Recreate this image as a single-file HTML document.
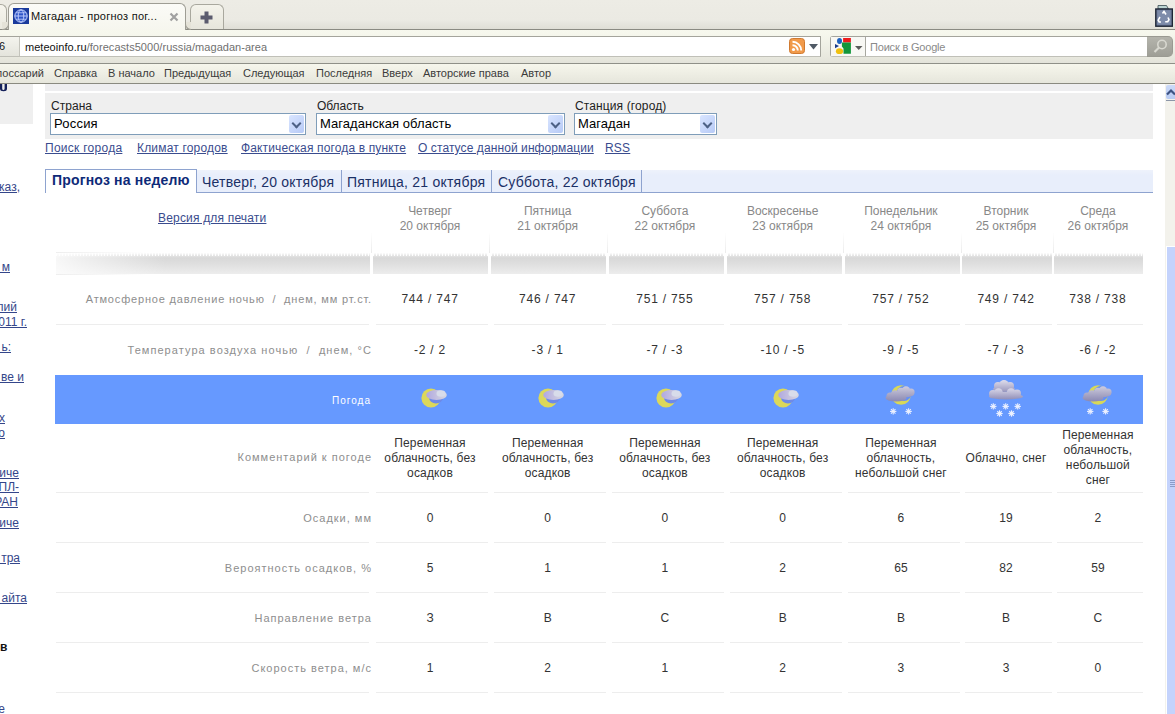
<!DOCTYPE html>
<html><head><meta charset="utf-8">
<style>
*{margin:0;padding:0;box-sizing:border-box}
html,body{width:1175px;height:714px;overflow:hidden;background:#fff;font-family:"Liberation Sans",sans-serif;position:relative}
.a{position:absolute;white-space:nowrap}
/* chrome */
#tabbar{position:absolute;left:0;top:0;width:1175px;height:29px;background:linear-gradient(#EDECE5 0,#EBEAE3 20px,#DFDED6 29px)}
#line29{position:absolute;left:0;top:29px;width:1175px;height:1px;background:#8A8A82}
#nav{position:absolute;left:0;top:30px;width:1175px;height:33px;background:linear-gradient(#F7F8EE 0,#F5F6EC 6px,#E8E8DE 27px,#E3E3DA 33px)}
#line63{position:absolute;left:0;top:63px;width:1175px;height:1px;background:#8F9088}
#bm{position:absolute;left:0;top:64px;width:1175px;height:19px;background:linear-gradient(#F6F6EC,#E6E6DC)}
#line83{position:absolute;left:0;top:83px;width:1175px;height:1px;background:#8A8A80}
.tab{position:absolute;border:1px solid #A9A89E;border-bottom:none;border-radius:6px 6px 0 0}
.bmi{position:absolute;top:67px;font-size:11px;color:#3B3B3B;white-space:nowrap;line-height:13px}
/* page */
.lbl{position:absolute;right:803px;font-size:11px;color:#8E8E8E;letter-spacing:1px;white-space:nowrap;text-align:right;line-height:13px}
.val{position:absolute;font-size:12px;color:#333;text-align:center;white-space:nowrap;line-height:13px}
.sep{position:absolute;height:1px;background:#EDEDED}
.lnk{position:absolute;font-size:12px;color:#3A4C8E;text-decoration:underline;white-space:nowrap;line-height:14px}
.sel{position:absolute;top:113px;height:22px;border:1px solid #7F9DB9;background:#fff}
.sel .t{position:absolute;left:3px;top:2px;font-size:13px;color:#000;white-space:nowrap;letter-spacing:0.05px}
.sel .b{position:absolute;right:1px;top:1px;width:15px;height:18px;background:linear-gradient(135deg,#D9E5FF,#B7CAF6);border-radius:2px}
.sel .b:after{content:"";position:absolute;left:4px;top:5px;width:5px;height:5px;border-right:2px solid #4D6185;border-bottom:2px solid #4D6185;transform:rotate(45deg)}
.ptab{position:absolute;font-size:14px;color:#1B3066;white-space:nowrap;letter-spacing:0.23px;line-height:16px}
.dh{position:absolute;font-size:12px;line-height:15px;color:#888;text-align:center;white-space:nowrap}
.ruler{position:absolute;top:253px;height:21px;background:linear-gradient(#FDFDFD 0,#F4F4F4 1px,#E2E2E2 3px,#D8D8D8 5px,#E0E0E0 12px,#EDEDED 21px)}
.ruler:before{content:"";position:absolute;left:0;right:0;top:0;height:3px;background:repeating-linear-gradient(90deg,#FFF 0,#FFF 1px,transparent 1px,transparent 3px)}
.rl0{}
.rl0:after{content:"";position:absolute;left:0;top:0;bottom:0;width:110px;background:linear-gradient(90deg,rgba(255,255,255,0.8) 0,rgba(255,255,255,0.55) 30px,rgba(255,255,255,0) 110px)}
.ruler i{position:absolute;top:0;width:1px;height:6px;background:#FFF}
.cm{line-height:15px}
.sb{position:absolute;font-size:12px;color:#34468A;text-decoration:underline;white-space:nowrap;line-height:14px}
</style></head><body>

<!-- ===== browser chrome ===== -->
<div id="tabbar"></div>
<div class="tab" style="left:-10px;top:4px;width:17px;height:25px;background:linear-gradient(#F6F5EE,#EAE9DF)"></div>

<div class="tab" style="left:190px;top:4px;width:34px;height:26px;background:linear-gradient(#F4F3EB,#E6E5DB)"></div>
<svg class="a" style="left:199px;top:10px" width="15" height="15" viewBox="0 0 15 15"><path d="M5.5 1.5h4v4h4v4h-4v4h-4v-4h-4v-4h4z" fill="#5B5B6E"/></svg>
<svg class="a" style="left:1155px;top:5px" width="18" height="22" viewBox="0 0 18 22"><path d="M3 0.5h8.5l2 3.5H3z" fill="#BCD4D2" stroke="#3A4A50" stroke-width="0.8"/><rect x="0.8" y="4" width="16.6" height="17.2" fill="#6E7C9C" stroke="#1E2636" stroke-width="1.4"/><rect x="2.5" y="5.5" width="13" height="14" fill="#7E8CAA"/><path d="M7.5 8.5l1.5-2 2 3M13 12.5l1 2.2-1.3 2h-2.5M6 17H4.2l-1-1.8L5 12" stroke="#FFF" stroke-width="1.6" fill="none"/></svg>
<div id="line29"></div>
<div id="nav"></div>
<div class="tab" style="left:8px;top:3px;width:178px;height:27px;background:linear-gradient(#FBFBF7,#F6F6EE);border-color:#9E9D94"></div>
<div class="a" style="left:185px;top:22px;width:6px;height:8px;border-left:1px solid #9E9D94;border-bottom:1px solid #9E9D94;border-radius:0 0 0 6px;background:#E5E3D8"></div>
<div class="a" style="left:2px;top:22px;width:7px;height:8px;border-right:1px solid #9E9D94;border-bottom:1px solid #9E9D94;border-radius:0 0 6px 0;background:#E5E3D8"></div>
<svg class="a" style="left:13px;top:8px" width="16" height="16" viewBox="0 0 16 16"><rect width="16" height="16" fill="#1A3A9C"/><circle cx="8" cy="8" r="6.2" fill="#2E55C8" stroke="#C8D4FF" stroke-width="1"/><ellipse cx="8" cy="8" rx="2.8" ry="6.2" fill="none" stroke="#C8D4FF" stroke-width="0.9"/><line x1="1.8" y1="8" x2="14.2" y2="8" stroke="#C8D4FF" stroke-width="0.9"/><line x1="3" y1="4.8" x2="13" y2="4.8" stroke="#C8D4FF" stroke-width="0.8"/><line x1="3" y1="11.2" x2="13" y2="11.2" stroke="#C8D4FF" stroke-width="0.8"/></svg>
<div class="a" style="left:31px;top:10px;font-size:11px;letter-spacing:0.26px;color:#111">Магадан - прогноз пог...</div>
<svg class="a" style="left:169px;top:12px" width="10" height="10" viewBox="0 0 10 10"><path d="M1.5 1.5L8.5 8.5M8.5 1.5L1.5 8.5" stroke="#A0A0A0" stroke-width="2.2"/></svg>


<div class="a" style="left:-1px;top:36px;width:822px;height:21px;border:1px solid #A4A49C;border-bottom-color:#C0C0B8;background:#fff"></div>
<div class="a" style="left:0;top:37px;width:20px;height:19px;background:linear-gradient(#F4F4EE,#E4E4DC);border-right:1px solid #C4C4BC"></div>
<div class="a" style="left:-1px;top:40px;font-size:11px;color:#111">6</div>
<div class="a" style="left:25px;top:41px;font-size:11px;letter-spacing:0.04px;color:#111">meteoinfo.ru<span style="color:#707070">/forecasts5000/russia/magadan-area</span></div>
<svg class="a" style="left:789px;top:38px" width="16" height="16" viewBox="0 0 16 16"><rect x="0.5" y="0.5" width="15" height="15" rx="3" fill="#F19A4A" stroke="#D07A30"/><circle cx="4.5" cy="11.5" r="1.6" fill="#fff"/><path d="M3.5 7.2a5.3 5.3 0 0 1 5.3 5.3M3.5 3.8a8.7 8.7 0 0 1 8.7 8.7" stroke="#fff" stroke-width="1.9" fill="none"/></svg>
<svg class="a" style="left:809px;top:44px" width="9" height="6" viewBox="0 0 9 6"><path d="M0 0h9L4.5 5.5z" fill="#505A66"/></svg>
<div class="a" style="left:830px;top:36px;width:318px;height:21px;border:1px solid #A4A49C;border-radius:3px 0 0 3px;border-bottom-color:#C0C0B8;background:#fff"></div>
<div class="a" style="left:831px;top:37px;width:35px;height:19px;border-right:1px solid #A8A8A0;background:#F8F8F4"></div>
<svg class="a" style="left:835px;top:38px" width="17" height="17" viewBox="0 0 17 17"><ellipse cx="4.5" cy="3" rx="2.5" ry="3" fill="#1E62C0"/><path d="M8.1 0h7.8v4.5H8.1z" fill="#EE1B1B"/><path d="M6.9 4.5h9v11.2H8.5V10.5L6.9 8.5z" fill="#12963A"/><path d="M0 5.9L4 8 0 10.3z" fill="#1C3C8A"/><ellipse cx="4.5" cy="13.2" rx="3.6" ry="2.9" fill="#F0C010"/></svg>
<svg class="a" style="left:855px;top:46px" width="8" height="4" viewBox="0 0 8 4"><path d="M0 0h7.5L3.75 4z" fill="#5A5A5A"/></svg>
<div class="a" style="left:870px;top:41px;font-size:11px;letter-spacing:-0.19px;color:#8A8A8A">Поиск в Google</div>
<div class="a" style="left:1147px;top:36px;width:26px;height:21px;background:linear-gradient(#B4B4AC,#9E9E96);border-radius:0 5px 5px 0;border:1px solid #9A9A92;border-left:none"></div>
<svg class="a" style="left:1152px;top:38px" width="17" height="17" viewBox="0 0 17 17"><circle cx="10" cy="6.5" r="4.2" fill="none" stroke="#D8D8D0" stroke-width="1.6"/><path d="M7 9.5L2.5 14" stroke="#D8D8D0" stroke-width="2.2"/></svg>
<div id="line63"></div>
<div id="bm"></div>
<div class="bmi" style="left:0;width:44px;text-align:right;direction:rtl"><span style="direction:ltr;unicode-bidi:embed">Глоссарий</span></div>
<div class="bmi" style="left:54px">Справка</div>
<div class="bmi" style="left:108px">В начало</div>
<div class="bmi" style="left:164px">Предыдущая</div>
<div class="bmi" style="left:243px">Следующая</div>
<div class="bmi" style="left:316px">Последняя</div>
<div class="bmi" style="left:382px">Вверх</div>
<div class="bmi" style="left:423px">Авторские права</div>
<div class="bmi" style="left:521px">Автор</div>
<div id="line83"></div>

<!-- ===== left sidebar fragment ===== -->
<div class="a" style="left:0;top:84px;width:33px;height:40px;background:#EFEFEF"></div>
<svg class="a" style="left:0;top:84px" width="8" height="8" viewBox="0 0 8 8"><path d="M0 0h2.2v4.5q0 1.6 1.2 1.6 1.2 0 1.2-1.6V0H7v4.8Q7 7.3 3.6 7.3 0 7.3 0 4.8z" fill="#14205A"/></svg>
<div class="sb" style="right:1155px;top:180px">Указ,</div>
<div class="sb" style="right:1165px;top:260px">Прогноз м</div>
<div class="sb" style="right:1158px;top:300px">Июлий</div>
<div class="sb" style="right:1148px;top:315px">2011 г.</div>
<div class="sb" style="right:1164px;top:340px">&nbsp;ь:</div>
<div class="sb" style="right:1151px;top:370px">&nbsp;ве и</div>
<div class="sb" style="right:1170px;top:411px">ых</div>
<div class="sb" style="right:1170px;top:426px">ло</div>
<div class="sb" style="right:1156px;top:466px">Арктиче</div>
<div class="sb" style="right:1156px;top:480px">ПЛ-</div>
<div class="sb" style="right:1157px;top:495px">РАН</div>
<div class="sb" style="right:1156px;top:516px">Арктиче</div>
<div class="sb" style="right:1155px;top:551px">&nbsp;тра</div>
<div class="sb" style="right:1148px;top:591px">&nbsp;айта</div>
<div class="sb" style="right:1167.5px;top:640px;color:#111;text-decoration:none;font-weight:bold">ов</div>
<div class="sb" style="right:1170px;top:702px">е</div>

<!-- ===== page ===== -->
<div class="a" style="left:45px;top:84px;width:1108px;height:7px;background:#EEEEF0"></div>
<div class="a" style="left:45px;top:93px;width:1108px;height:46px;background:#EFEFEF"></div>
<div class="a" style="left:51px;top:99px;font-size:12px;color:#222;letter-spacing:0.04px">Страна</div>
<div class="a" style="left:317px;top:99px;font-size:12px;color:#222;letter-spacing:-0.05px">Область</div>
<div class="a" style="left:575px;top:99px;font-size:12px;color:#222;letter-spacing:0.12px">Станция (город)</div>
<div class="sel" style="left:50px;width:256px"><span class="t" style="letter-spacing:0.2px">Россия</span><span class="b"></span></div>
<div class="sel" style="left:316px;width:249px"><span class="t">Магаданская область</span><span class="b"></span></div>
<div class="sel" style="left:574px;width:143px"><span class="t">Магадан</span><span class="b"></span></div>

<div class="lnk" style="left:45px;top:141px;letter-spacing:0.27px">Поиск города</div>
<div class="lnk" style="left:137px;top:141px;letter-spacing:0.18px">Климат городов</div>
<div class="lnk" style="left:241px;top:141px;letter-spacing:0.14px">Фактическая погода в пункте</div>
<div class="lnk" style="left:418px;top:141px;letter-spacing:0.09px">О статусе данной информации</div>
<div class="lnk" style="left:605px;top:141px;letter-spacing:0.2px">RSS</div>

<!-- tabs -->
<div class="a" style="left:45px;top:170px;width:1108px;height:23px;background:linear-gradient(#EEF2FB,#E8EEFB 5px);border-bottom:1px solid #8EA3CF"></div>
<div class="a" style="left:45px;top:169px;width:152px;height:24px;background:#fff;border:1px solid #8EA3CF;border-bottom:none"></div>
<div class="a" style="left:52px;top:172px;font-size:14px;font-weight:bold;color:#0E2A78;letter-spacing:0.18px;line-height:16px">Прогноз на неделю</div>
<div class="ptab" style="left:202px;top:174px">Четверг, 20 октября</div>
<div class="a" style="left:341px;top:170px;width:1px;height:22px;background:#8EA3CF"></div>
<div class="ptab" style="left:347px;top:174px">Пятница, 21 октября</div>
<div class="a" style="left:491px;top:170px;width:1px;height:22px;background:#8EA3CF"></div>
<div class="ptab" style="left:498px;top:174px">Суббота, 22 октября</div>
<div class="a" style="left:641px;top:170px;width:1px;height:22px;background:#8EA3CF"></div>

<div class="lnk" style="left:158px;top:211px;letter-spacing:0.18px">Версия для печати</div>

<!-- scrollbar -->
<div class="a" style="left:1164px;top:84px;width:11px;height:630px;background:#F3F2EC;border-left:1px solid #FFFFFF"></div>
<div class="a" style="left:1166px;top:85px;width:9px;height:14px;background:linear-gradient(#CCDAF8,#B8CBF3);border-radius:2px 0 0 2px"></div>
<div class="a" style="left:1166px;top:100px;width:9px;height:1px;background:#8C96A8"></div>
<svg class="a" style="left:1166px;top:88px" width="9" height="8" viewBox="0 0 9 8"><path d="M1 6.5L5 2.5 9 6.5" stroke="#3E5382" stroke-width="2.2" fill="none"/></svg>
<div class="a" style="left:1166px;top:246px;width:9px;height:468px;background:#C4D3FC;border-top:1px solid #FFFFFF;border-left:1px solid #FFFFFF"></div>
<div class="a" style="left:1170px;top:480px;width:5px;height:7px;background:repeating-linear-gradient(#8C9CC8 0,#8C9CC8 1px,transparent 1px,transparent 2px)"></div>

<div class="dh" style="left:371.0px;width:118px;top:204px">Четверг<br>20 октября</div>
<div class="dh" style="left:488.70000000000005px;width:118px;top:204px">Пятница<br>21 октября</div>
<div class="dh" style="left:605.9px;width:118px;top:204px">Суббота<br>22 октября</div>
<div class="dh" style="left:723.7px;width:118px;top:204px">Воскресенье<br>23 октября</div>
<div class="dh" style="left:841.9px;width:118px;top:204px">Понедельник<br>24 октября</div>
<div class="dh" style="left:960.0px;width:92px;top:204px">Вторник<br>25 октября</div>
<div class="dh" style="left:1051.9px;width:92px;top:204px">Среда<br>26 октября</div>
<div class="ruler rl0" style="left:56px;width:314px"></div>
<div class="a" style="left:56px;top:252px;width:90px;height:1px;background:linear-gradient(90deg,#EEE,rgba(238,238,238,0))"></div>
<div class="a" style="left:56px;top:274px;width:90px;height:1px;background:linear-gradient(90deg,#EEE,rgba(238,238,238,0))"></div>
<div class="ruler" style="left:373px;width:115px"></div>
<div class="ruler" style="left:491px;width:115px"></div>
<div class="ruler" style="left:609px;width:115px"></div>
<div class="ruler" style="left:727px;width:115px"></div>
<div class="ruler" style="left:845px;width:115px"></div>
<div class="ruler" style="left:962px;width:90px"></div>
<div class="ruler" style="left:1054px;width:89px"></div>
<div class="a" style="left:371px;top:232px;width:1px;height:21px;background:linear-gradient(rgba(235,235,235,0),#EBEBEB)"></div>
<div class="a" style="left:489px;top:232px;width:1px;height:21px;background:linear-gradient(rgba(235,235,235,0),#EBEBEB)"></div>
<div class="a" style="left:607px;top:232px;width:1px;height:21px;background:linear-gradient(rgba(235,235,235,0),#EBEBEB)"></div>
<div class="a" style="left:725px;top:232px;width:1px;height:21px;background:linear-gradient(rgba(235,235,235,0),#EBEBEB)"></div>
<div class="a" style="left:843px;top:232px;width:1px;height:21px;background:linear-gradient(rgba(235,235,235,0),#EBEBEB)"></div>
<div class="a" style="left:961px;top:232px;width:1px;height:21px;background:linear-gradient(rgba(235,235,235,0),#EBEBEB)"></div>
<div class="a" style="left:1053px;top:232px;width:1px;height:21px;background:linear-gradient(rgba(235,235,235,0),#EBEBEB)"></div>
<div class="lbl" style="top:293px;letter-spacing:0.82px">Атмосферное давление ночью&nbsp; /&nbsp; днем, мм рт.ст.</div>
<div class="val" style="left:371.0px;width:118px;top:293px;letter-spacing:0.8px">744 / 747</div>
<div class="val" style="left:488.70000000000005px;width:118px;top:293px;letter-spacing:0.8px">746 / 747</div>
<div class="val" style="left:605.9px;width:118px;top:293px;letter-spacing:0.8px">751 / 755</div>
<div class="val" style="left:723.7px;width:118px;top:293px;letter-spacing:0.8px">757 / 758</div>
<div class="val" style="left:841.9px;width:118px;top:293px;letter-spacing:0.8px">757 / 752</div>
<div class="val" style="left:960.0px;width:92px;top:293px;letter-spacing:0.8px">749 / 742</div>
<div class="val" style="left:1051.9px;width:92px;top:293px;letter-spacing:0.8px">738 / 738</div>
<div class="sep" style="left:56px;width:313px;top:324px"></div>
<div class="sep" style="left:376px;width:112px;top:324px"></div>
<div class="sep" style="left:494px;width:112px;top:324px"></div>
<div class="sep" style="left:612px;width:112px;top:324px"></div>
<div class="sep" style="left:730px;width:112px;top:324px"></div>
<div class="sep" style="left:848px;width:112px;top:324px"></div>
<div class="sep" style="left:965px;width:87px;top:324px"></div>
<div class="sep" style="left:1057px;width:86px;top:324px"></div>
<div class="lbl" style="top:344px;letter-spacing:1.06px">Температура воздуха ночью&nbsp; /&nbsp; днем, °C</div>
<div class="val" style="left:371.0px;width:118px;top:344px;letter-spacing:0.8px">-2 / 2</div>
<div class="val" style="left:488.70000000000005px;width:118px;top:344px;letter-spacing:0.8px">-3 / 1</div>
<div class="val" style="left:605.9px;width:118px;top:344px;letter-spacing:0.8px">-7 / -3</div>
<div class="val" style="left:723.7px;width:118px;top:344px;letter-spacing:0.8px">-10 / -5</div>
<div class="val" style="left:841.9px;width:118px;top:344px;letter-spacing:0.8px">-9 / -5</div>
<div class="val" style="left:960.0px;width:92px;top:344px;letter-spacing:0.8px">-7 / -3</div>
<div class="val" style="left:1051.9px;width:92px;top:344px;letter-spacing:0.8px">-6 / -2</div>
<div class="a" style="left:55px;top:375px;width:1088px;height:49px;background:#6699FF"></div>
<div class="lbl" style="top:394px;color:#fff;font-size:10px;letter-spacing:1px;right:804px">Погода</div>
<svg width="0" height="0" style="position:absolute"><defs>
<linearGradient id="cg" gradientUnits="userSpaceOnUse" x1="0" y1="2" x2="0" y2="22"><stop offset="0" stop-color="#E8E6F2"/><stop offset="0.55" stop-color="#B4B2CC"/><stop offset="1" stop-color="#8C8AB4"/></linearGradient>
<linearGradient id="cg2" x1="0" y1="0" x2="1" y2="0"><stop offset="0" stop-color="#B0A8E0"/><stop offset="1" stop-color="#D8D8E0"/></linearGradient>
<radialGradient id="mg" cx="0.4" cy="0.6" r="0.6"><stop offset="0" stop-color="#F0D850"/><stop offset="1" stop-color="#D8D860"/></radialGradient>
<linearGradient id="cgt" gradientUnits="userSpaceOnUse" x1="0" y1="1" x2="0" y2="13"><stop offset="0" stop-color="#E0DEEC"/><stop offset="1" stop-color="#9896BC"/></linearGradient>
<linearGradient id="cgb" gradientUnits="userSpaceOnUse" x1="0" y1="9" x2="0" y2="21"><stop offset="0" stop-color="#DCDAEA"/><stop offset="1" stop-color="#8E8CB6"/></linearGradient>
</defs></svg>
<svg class="a" style="left:410.5px;top:379px" width="40" height="44" viewBox="0 0 40 44"><circle cx="20" cy="19" r="9.6" fill="#DCD85A"/><ellipse cx="25" cy="18.5" rx="7" ry="6" fill="#6E8AE8"/><ellipse cx="25.5" cy="16" rx="10.3" ry="5" fill="url(#cg2)"/><ellipse cx="30" cy="14.5" rx="4.5" ry="3.2" fill="#D8DCEA"/></svg>
<svg class="a" style="left:528px;top:379px" width="40" height="44" viewBox="0 0 40 44"><circle cx="20" cy="19" r="9.6" fill="#DCD85A"/><ellipse cx="25" cy="18.5" rx="7" ry="6" fill="#6E8AE8"/><ellipse cx="25.5" cy="16" rx="10.3" ry="5" fill="url(#cg2)"/><ellipse cx="30" cy="14.5" rx="4.5" ry="3.2" fill="#D8DCEA"/></svg>
<svg class="a" style="left:645.5px;top:379px" width="40" height="44" viewBox="0 0 40 44"><circle cx="20" cy="19" r="9.6" fill="#DCD85A"/><ellipse cx="25" cy="18.5" rx="7" ry="6" fill="#6E8AE8"/><ellipse cx="25.5" cy="16" rx="10.3" ry="5" fill="url(#cg2)"/><ellipse cx="30" cy="14.5" rx="4.5" ry="3.2" fill="#D8DCEA"/></svg>
<svg class="a" style="left:763px;top:379px" width="40" height="44" viewBox="0 0 40 44"><circle cx="20" cy="19" r="9.6" fill="#DCD85A"/><ellipse cx="25" cy="18.5" rx="7" ry="6" fill="#6E8AE8"/><ellipse cx="25.5" cy="16" rx="10.3" ry="5" fill="url(#cg2)"/><ellipse cx="30" cy="14.5" rx="4.5" ry="3.2" fill="#D8DCEA"/></svg>
<svg class="a" style="left:880.5px;top:379px" width="40" height="44" viewBox="0 0 40 44"><circle cx="20" cy="16" r="9.8" fill="#D8D858"/><circle cx="23" cy="14.5" rx="8" r="7.6" fill="#6690F4"/><g fill="url(#cg)"><circle cx="20" cy="12.5" r="3.8"/><circle cx="25" cy="11.5" r="4.2"/><circle cx="30" cy="13" r="3.6"/><ellipse cx="24" cy="15" rx="9" ry="3.2"/></g><g fill="url(#cg)"><circle cx="9" cy="17" r="3.5"/><circle cx="14" cy="15.5" r="4.2"/><circle cx="19.5" cy="16.5" r="3.8"/><ellipse cx="15" cy="19" rx="10.5" ry="3.4"/></g><g stroke="#F4F6FF" stroke-width="1.1" opacity="0.95"><line x1="9.0" y1="32.4" x2="15.399999999999999" y2="32.4"/><line x1="12.2" y1="29.2" x2="12.2" y2="35.6"/><line x1="9.959999999999999" y1="30.16" x2="14.44" y2="34.64"/><line x1="9.959999999999999" y1="34.64" x2="14.44" y2="30.16"/></g><g stroke="#F4F6FF" stroke-width="1.1" opacity="0.95"><line x1="24.400000000000002" y1="32.4" x2="30.8" y2="32.4"/><line x1="27.6" y1="29.2" x2="27.6" y2="35.6"/><line x1="25.360000000000003" y1="30.16" x2="29.84" y2="34.64"/><line x1="25.360000000000003" y1="34.64" x2="29.84" y2="30.16"/></g></svg>
<svg class="a" style="left:986px;top:379px" width="40" height="44" viewBox="0 0 40 44"><g fill="url(#cgt)"><circle cx="12" cy="7" r="4"/><circle cx="18" cy="5.5" r="4.6"/><circle cx="24" cy="7" r="4"/><ellipse cx="18" cy="10" rx="11" ry="3"/></g><g fill="url(#cgb)"><circle cx="7" cy="15" r="4"/><circle cx="12.5" cy="13.5" r="4.3"/><circle cx="25" cy="13.5" r="4.3"/><circle cx="31" cy="14.5" r="4"/><ellipse cx="20" cy="17.5" rx="17" ry="3"/><rect x="8" y="13" width="22" height="6"/></g><g stroke="#F4F6FF" stroke-width="1.1" opacity="0.95"><line x1="4.1" y1="27.4" x2="10.5" y2="27.4"/><line x1="7.3" y1="24.2" x2="7.3" y2="30.599999999999998"/><line x1="5.0600000000000005" y1="25.16" x2="9.54" y2="29.639999999999997"/><line x1="5.0600000000000005" y1="29.639999999999997" x2="9.54" y2="25.16"/></g><g stroke="#F4F6FF" stroke-width="1.1" opacity="0.95"><line x1="16.5" y1="27.4" x2="22.9" y2="27.4"/><line x1="19.7" y1="24.2" x2="19.7" y2="30.599999999999998"/><line x1="17.46" y1="25.16" x2="21.939999999999998" y2="29.639999999999997"/><line x1="17.46" y1="29.639999999999997" x2="21.939999999999998" y2="25.16"/></g><g stroke="#F4F6FF" stroke-width="1.1" opacity="0.95"><line x1="28.5" y1="27.4" x2="34.9" y2="27.4"/><line x1="31.7" y1="24.2" x2="31.7" y2="30.599999999999998"/><line x1="29.46" y1="25.16" x2="33.94" y2="29.639999999999997"/><line x1="29.46" y1="29.639999999999997" x2="33.94" y2="25.16"/></g><g stroke="#F4F6FF" stroke-width="1.1" opacity="0.95"><line x1="10.3" y1="34.5" x2="16.7" y2="34.5"/><line x1="13.5" y1="31.3" x2="13.5" y2="37.7"/><line x1="11.26" y1="32.26" x2="15.74" y2="36.74"/><line x1="11.26" y1="36.74" x2="15.74" y2="32.26"/></g><g stroke="#F4F6FF" stroke-width="1.1" opacity="0.95"><line x1="22.3" y1="34.5" x2="28.7" y2="34.5"/><line x1="25.5" y1="31.3" x2="25.5" y2="37.7"/><line x1="23.26" y1="32.26" x2="27.74" y2="36.74"/><line x1="23.26" y1="36.74" x2="27.74" y2="32.26"/></g></svg>
<svg class="a" style="left:1078px;top:379px" width="40" height="44" viewBox="0 0 40 44"><circle cx="20" cy="16" r="9.8" fill="#D8D858"/><circle cx="23" cy="14.5" rx="8" r="7.6" fill="#6690F4"/><g fill="url(#cg)"><circle cx="20" cy="12.5" r="3.8"/><circle cx="25" cy="11.5" r="4.2"/><circle cx="30" cy="13" r="3.6"/><ellipse cx="24" cy="15" rx="9" ry="3.2"/></g><g fill="url(#cg)"><circle cx="9" cy="17" r="3.5"/><circle cx="14" cy="15.5" r="4.2"/><circle cx="19.5" cy="16.5" r="3.8"/><ellipse cx="15" cy="19" rx="10.5" ry="3.4"/></g><g stroke="#F4F6FF" stroke-width="1.1" opacity="0.95"><line x1="9.0" y1="32.4" x2="15.399999999999999" y2="32.4"/><line x1="12.2" y1="29.2" x2="12.2" y2="35.6"/><line x1="9.959999999999999" y1="30.16" x2="14.44" y2="34.64"/><line x1="9.959999999999999" y1="34.64" x2="14.44" y2="30.16"/></g><g stroke="#F4F6FF" stroke-width="1.1" opacity="0.95"><line x1="24.400000000000002" y1="32.4" x2="30.8" y2="32.4"/><line x1="27.6" y1="29.2" x2="27.6" y2="35.6"/><line x1="25.360000000000003" y1="30.16" x2="29.84" y2="34.64"/><line x1="25.360000000000003" y1="34.64" x2="29.84" y2="30.16"/></g></svg>
<div class="lbl" style="top:451px">Комментарий к погоде</div>
<div class="val cm" style="left:371.0px;width:118px;top:436px;letter-spacing:0.15px">Переменная<br>облачность, без<br>осадков</div>
<div class="val cm" style="left:488.70000000000005px;width:118px;top:436px;letter-spacing:0.15px">Переменная<br>облачность, без<br>осадков</div>
<div class="val cm" style="left:605.9px;width:118px;top:436px;letter-spacing:0.15px">Переменная<br>облачность, без<br>осадков</div>
<div class="val cm" style="left:723.7px;width:118px;top:436px;letter-spacing:0.15px">Переменная<br>облачность, без<br>осадков</div>
<div class="val cm" style="left:841.9px;width:118px;top:436px;letter-spacing:0.15px">Переменная<br>облачность,<br>небольшой снег</div>
<div class="val cm" style="left:960.0px;width:92px;top:451px;letter-spacing:0.15px">Облачно, снег</div>
<div class="val cm" style="left:1051.9px;width:92px;top:428px;letter-spacing:0.15px">Переменная<br>облачность,<br>небольшой<br>снег</div>
<div class="sep" style="left:56px;width:313px;top:492px"></div>
<div class="sep" style="left:376px;width:112px;top:492px"></div>
<div class="sep" style="left:494px;width:112px;top:492px"></div>
<div class="sep" style="left:612px;width:112px;top:492px"></div>
<div class="sep" style="left:730px;width:112px;top:492px"></div>
<div class="sep" style="left:848px;width:112px;top:492px"></div>
<div class="sep" style="left:965px;width:87px;top:492px"></div>
<div class="sep" style="left:1057px;width:86px;top:492px"></div>
<div class="lbl" style="top:512px">Осадки, мм</div>
<div class="val" style="left:371.0px;width:118px;top:512px">0</div>
<div class="val" style="left:488.70000000000005px;width:118px;top:512px">0</div>
<div class="val" style="left:605.9px;width:118px;top:512px">0</div>
<div class="val" style="left:723.7px;width:118px;top:512px">0</div>
<div class="val" style="left:841.9px;width:118px;top:512px">6</div>
<div class="val" style="left:960.0px;width:92px;top:512px">19</div>
<div class="val" style="left:1051.9px;width:92px;top:512px">2</div>
<div class="sep" style="left:56px;width:313px;top:542px"></div>
<div class="sep" style="left:376px;width:112px;top:542px"></div>
<div class="sep" style="left:494px;width:112px;top:542px"></div>
<div class="sep" style="left:612px;width:112px;top:542px"></div>
<div class="sep" style="left:730px;width:112px;top:542px"></div>
<div class="sep" style="left:848px;width:112px;top:542px"></div>
<div class="sep" style="left:965px;width:87px;top:542px"></div>
<div class="sep" style="left:1057px;width:86px;top:542px"></div>
<div class="lbl" style="top:562px">Вероятность осадков, %</div>
<div class="val" style="left:371.0px;width:118px;top:562px">5</div>
<div class="val" style="left:488.70000000000005px;width:118px;top:562px">1</div>
<div class="val" style="left:605.9px;width:118px;top:562px">1</div>
<div class="val" style="left:723.7px;width:118px;top:562px">2</div>
<div class="val" style="left:841.9px;width:118px;top:562px">65</div>
<div class="val" style="left:960.0px;width:92px;top:562px">82</div>
<div class="val" style="left:1051.9px;width:92px;top:562px">59</div>
<div class="sep" style="left:56px;width:313px;top:592px"></div>
<div class="sep" style="left:376px;width:112px;top:592px"></div>
<div class="sep" style="left:494px;width:112px;top:592px"></div>
<div class="sep" style="left:612px;width:112px;top:592px"></div>
<div class="sep" style="left:730px;width:112px;top:592px"></div>
<div class="sep" style="left:848px;width:112px;top:592px"></div>
<div class="sep" style="left:965px;width:87px;top:592px"></div>
<div class="sep" style="left:1057px;width:86px;top:592px"></div>
<div class="lbl" style="top:612px">Направление ветра</div>
<div class="val" style="left:371.0px;width:118px;top:612px">З</div>
<div class="val" style="left:488.70000000000005px;width:118px;top:612px">В</div>
<div class="val" style="left:605.9px;width:118px;top:612px">С</div>
<div class="val" style="left:723.7px;width:118px;top:612px">В</div>
<div class="val" style="left:841.9px;width:118px;top:612px">В</div>
<div class="val" style="left:960.0px;width:92px;top:612px">В</div>
<div class="val" style="left:1051.9px;width:92px;top:612px">С</div>
<div class="sep" style="left:56px;width:313px;top:642px"></div>
<div class="sep" style="left:376px;width:112px;top:642px"></div>
<div class="sep" style="left:494px;width:112px;top:642px"></div>
<div class="sep" style="left:612px;width:112px;top:642px"></div>
<div class="sep" style="left:730px;width:112px;top:642px"></div>
<div class="sep" style="left:848px;width:112px;top:642px"></div>
<div class="sep" style="left:965px;width:87px;top:642px"></div>
<div class="sep" style="left:1057px;width:86px;top:642px"></div>
<div class="lbl" style="top:662px">Скорость ветра, м/с</div>
<div class="val" style="left:371.0px;width:118px;top:662px">1</div>
<div class="val" style="left:488.70000000000005px;width:118px;top:662px">2</div>
<div class="val" style="left:605.9px;width:118px;top:662px">1</div>
<div class="val" style="left:723.7px;width:118px;top:662px">2</div>
<div class="val" style="left:841.9px;width:118px;top:662px">3</div>
<div class="val" style="left:960.0px;width:92px;top:662px">3</div>
<div class="val" style="left:1051.9px;width:92px;top:662px">0</div>
<div class="sep" style="left:56px;width:313px;top:692px"></div>
<div class="sep" style="left:376px;width:112px;top:692px"></div>
<div class="sep" style="left:494px;width:112px;top:692px"></div>
<div class="sep" style="left:612px;width:112px;top:692px"></div>
<div class="sep" style="left:730px;width:112px;top:692px"></div>
<div class="sep" style="left:848px;width:112px;top:692px"></div>
<div class="sep" style="left:965px;width:87px;top:692px"></div>
<div class="sep" style="left:1057px;width:86px;top:692px"></div>
</body></html>
